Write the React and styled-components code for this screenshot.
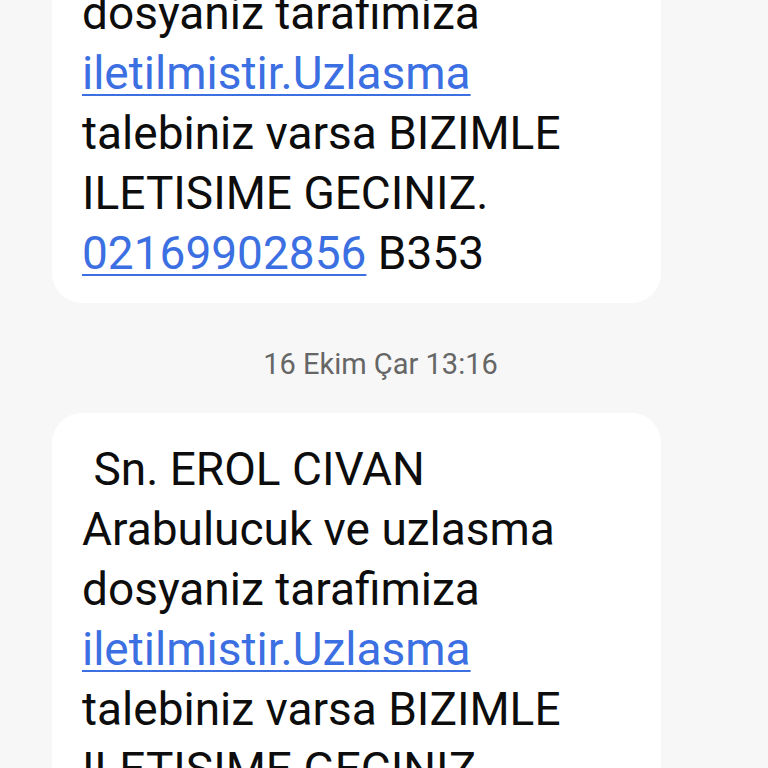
import React from 'react';
import styled, { createGlobalStyle } from 'styled-components';

const GlobalStyle = createGlobalStyle`
  html, body {
    margin: 0;
    padding: 0;
    background: #f7f7f7;
  }
  body {
    font-family: Roboto, 'Noto Sans', sans-serif;
  }
`;

const Screen = styled.div`
  width: 768px;
  height: 768px;
  overflow: hidden;
  background: #f7f7f7;
`;

const Thread = styled.div`
  display: flex;
  flex-direction: column;
  align-items: flex-start;
  margin-top: -163px;
  padding-left: 52px;
`;

const Bubble = styled.div`
  box-sizing: border-box;
  width: 609px;
  background: #ffffff;
  border-radius: 30px;
  padding: 26px 30px 20px 30px;
  font-size: 46px;
  line-height: 60px;
  color: #0d0d0d;
`;

const Line = styled.div`
  white-space: pre;
`;

const Link = styled.a`
  color: #3b6fe2;
  text-decoration: underline;
  text-decoration-thickness: 2px;
  text-underline-offset: 5px;
`;

const Stamp = styled.div`
  align-self: stretch;
  margin-left: -52px;
  text-align: center;
  font-size: 29px;
  color: #666666;
  padding: 45px 7px 33px 0;
  line-height: 32px;
`;

const messages = [
  { id: 1, stamp: null },
  { id: 2, stamp: '16 Ekim Çar 13:16' },
];

function Message() {
  return (
    <Bubble>
      <Line> Sn. EROL CIVAN</Line>
      <Line>Arabulucuk ve uzlasma</Line>
      <Line>dosyaniz tarafimiza</Line>
      <Line><Link>iletilmistir.Uzlasma</Link></Line>
      <Line>talebiniz varsa BIZIMLE</Line>
      <Line>ILETISIME GECINIZ.</Line>
      <Line><Link>02169902856</Link> B353</Line>
    </Bubble>
  );
}

export default function App() {
  return (
    <Screen>
      <GlobalStyle />
      <Thread>
        {messages.map(m => (
          <React.Fragment key={m.id}>
            {m.stamp && <Stamp>{m.stamp}</Stamp>}
            <Message />
          </React.Fragment>
        ))}
      </Thread>
    </Screen>
  );
}
